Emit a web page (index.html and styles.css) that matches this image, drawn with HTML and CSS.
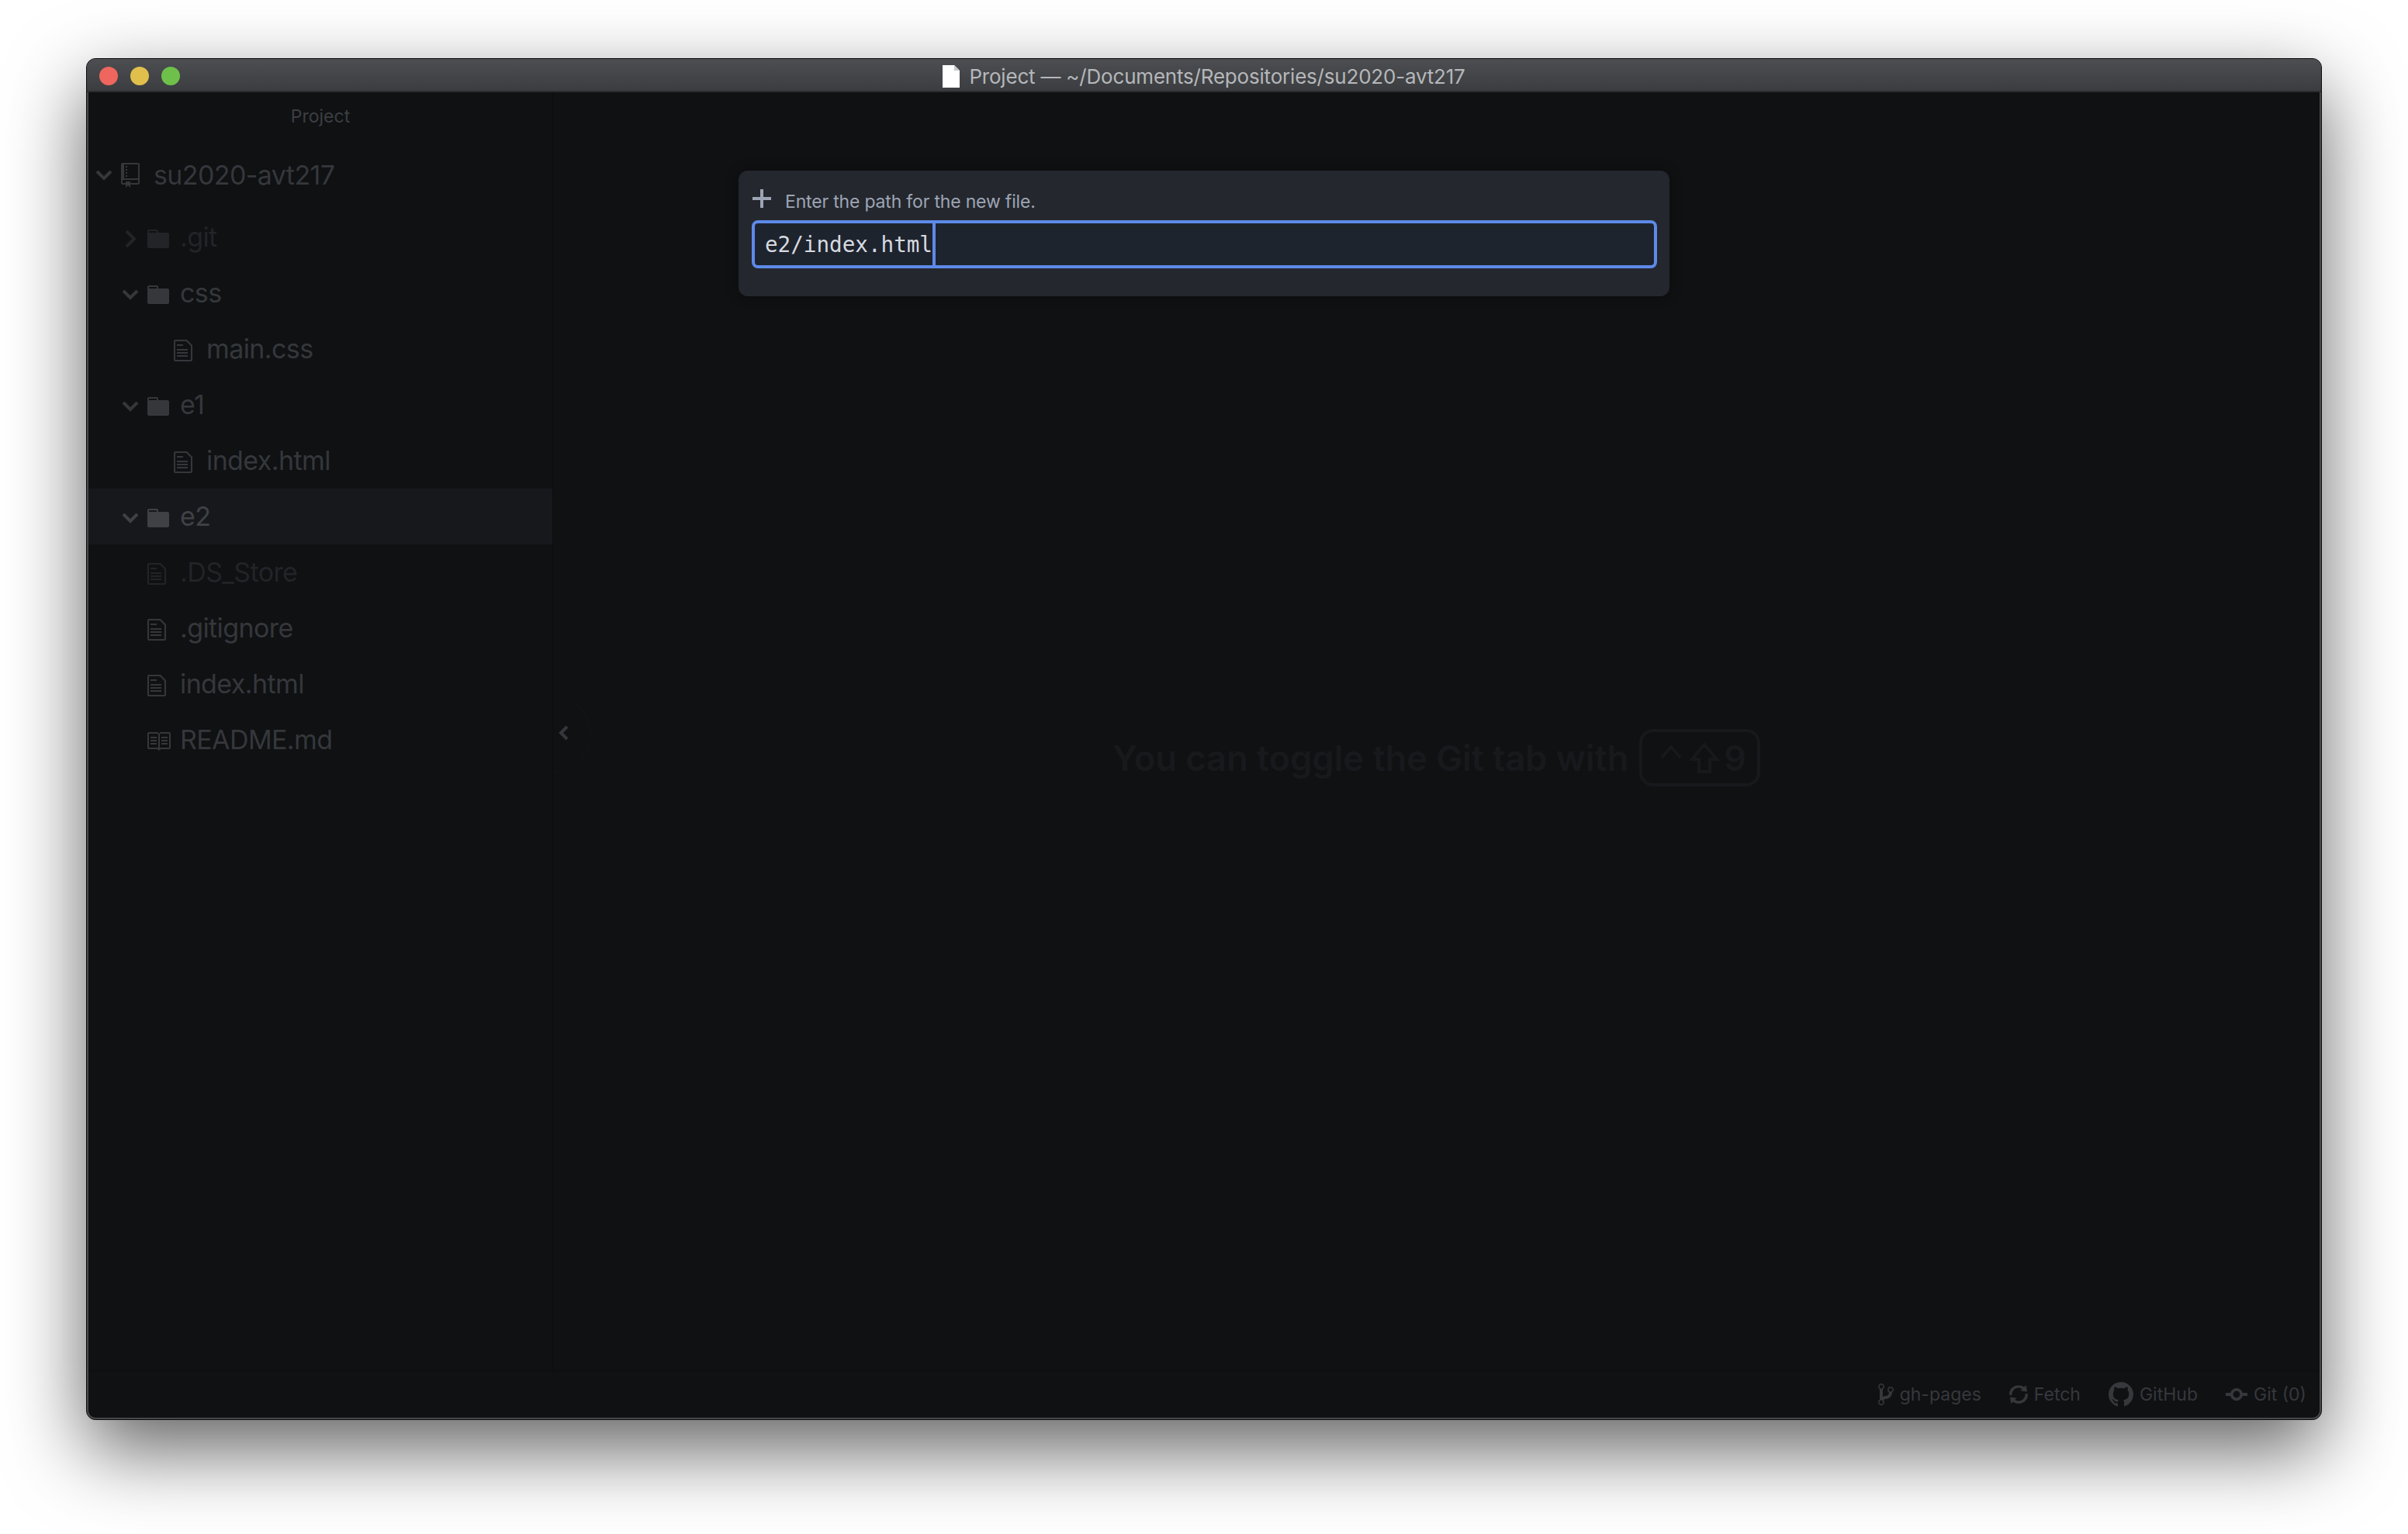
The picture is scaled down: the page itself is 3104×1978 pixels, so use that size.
FILE: index.html
```html
<!DOCTYPE html>
<html lang="en">
<head>
<meta charset="utf-8">
<title>Project</title>
<link rel="stylesheet" href="styles.css">
</head>
<body>
<svg class="defs" xmlns="http://www.w3.org/2000/svg">
  <symbol id="i-repo" viewBox="0 0 12 16"><path d="M4 9H3V8h1v1zm0-3H3v1h1V6zm0-2H3v1h1V4zm0-2H3v1h1V2zm8-1v12c0 .55-.45 1-1 1H6v2l-1.5-1.5L3 16v-2H1c-.55 0-1-.45-1-1V1c0-.55.45-1 1-1h10c.55 0 1 .45 1 1zm-1 10H1v2h2v-1h3v1h5v-2zm0-10H2v9h9V1z"/></symbol>
  <symbol id="i-folder" viewBox="0 0 14 16"><path d="M13 4H7V3c0-.66-.31-1-1-1H1c-.55 0-1 .45-1 1v10c0 .55.45 1 1 1h12c.55 0 1-.45 1-1V5c0-.55-.45-1-1-1zM6 4H1V3h5v1z"/></symbol>
  <symbol id="i-file" viewBox="0 0 12 16"><path d="M6 5H2V4h4v1zM2 8h7V7H2v1zm0 2h7V9H2v1zm0 2h7v-1H2v1zm10-7.500V14c0 .55-.45 1-1 1H1c-.55 0-1-.45-1-1V2c0-.55.45-1 1-1h7.500L12 4.500zM11 5L8 2H1v12h10V5z"/></symbol>
  <symbol id="i-book" viewBox="0 0 16 16"><path d="M3 5h4v1H3V5zm0 3h4V7H3v1zm0 2h4V9H3v1zm11-5h-4v1h4V5zm0 2h-4v1h4V7zm0 2h-4v1h4V9zm2-6v9c0 .55-.45 1-1 1H9.500l-1 1-1-1H2c-.55 0-1-.45-1-1V3c0-.55.45-1 1-1h5.500l1 1 1-1H15c.55 0 1 .45 1 1zm-8 .5L7.500 3H2v9h6V3.500zm7-.5H9.500l-.5.5V12h6V3z"/></symbol>
  <symbol id="i-branch" viewBox="0 0 10 16"><path d="M10 5c0-1.110-.89-2-2-2a1.993 1.993 0 0 0-1 3.720v.3c-.02.52-.23.98-.63 1.380-.4.4-.86.61-1.380.63-.83.02-1.480.16-2 .45V4.720a1.993 1.993 0 0 0-1-3.720C.88 1 0 1.890 0 3a2 2 0 0 0 1 1.720v6.560c-.59.35-1 .99-1 1.720 0 1.110.89 2 2 2 1.110 0 2-.89 2-2 0-.53-.2-1-.53-1.360.09-.06.48-.41.59-.47.25-.11.56-.17.94-.17 1.050-.05 1.950-.45 2.750-1.250S8.950 7.770 9 6.730h-.02C9.590 6.370 10 5.730 10 5zM2 1.800c.66 0 1.200.55 1.200 1.200 0 .65-.55 1.200-1.200 1.200C1.350 4.200.8 3.650.8 3c0-.65.55-1.200 1.200-1.200zm0 12.410c-.66 0-1.200-.55-1.200-1.200 0-.65.55-1.200 1.200-1.200.65 0 1.200.55 1.200 1.200 0 .65-.55 1.200-1.200 1.200zm6-8c-.66 0-1.200-.55-1.200-1.200 0-.65.55-1.200 1.200-1.200.65 0 1.200.55 1.200 1.200 0 .65-.55 1.200-1.200 1.200z"/></symbol>
  <symbol id="i-sync" viewBox="0 0 12 16"><path d="M10.240 7.400a4.150 4.150 0 0 1-1.200 3.600 4.346 4.346 0 0 1-5.410.54L4.800 10.400.5 9.800l.6 4.200 1.310-1.260c2.360 1.740 5.700 1.570 7.840-.54a5.876 5.876 0 0 0 1.740-4.460l-1.750-.34zM2.960 5a4.346 4.346 0 0 1 5.410-.54L7.200 5.600l4.300.6-.6-4.200-1.310 1.260c-2.360-1.740-5.700-1.570-7.850.54C.5 5.030-.06 6.650.01 8.260l1.750.35A4.170 4.170 0 0 1 2.960 5z"/></symbol>
  <symbol id="i-github" viewBox="0 0 16 16"><path d="M8 0C3.580 0 0 3.580 0 8c0 3.540 2.290 6.530 5.470 7.590.4.07.55-.17.55-.38 0-.19-.01-.82-.01-1.490-2.010.37-2.530-.49-2.690-.94-.09-.23-.48-.94-.82-1.130-.28-.15-.68-.52-.01-.53.63-.01 1.080.58 1.230.82.72 1.210 1.870.87 2.330.66.07-.52.28-.87.51-1.070-1.780-.2-3.640-.89-3.640-3.950 0-.87.31-1.590.82-2.150-.08-.2-.36-1.020.08-2.120 0 0 .67-.21 2.200.82.64-.18 1.320-.27 2-.27.68 0 1.360.09 2 .27 1.530-1.040 2.200-.82 2.200-.82.44 1.100.16 1.920.08 2.120.51.56.82 1.270.82 2.150 0 3.070-1.870 3.750-3.650 3.950.29.25.54.73.54 1.480 0 1.070-.01 1.930-.01 2.200 0 .21.15.46.55.38A8.013 8.013 0 0 0 16 8c0-4.420-3.580-8-8-8z"/></symbol>
  <symbol id="i-commit" viewBox="0 0 14 16"><path d="M10.860 7c-.45-1.720-2-3-3.860-3-1.860 0-3.410 1.280-3.860 3H0v2h3.140c.45 1.720 2 3 3.860 3 1.860 0 3.410-1.280 3.860-3H14V7h-3.140zM7 10.200c-1.220 0-2.200-.98-2.200-2.200 0-1.220.98-2.200 2.200-2.200 1.220 0 2.200.98 2.200 2.200 0 1.220-.98 2.200-2.200 2.200z"/></symbol>
  <symbol id="i-down" viewBox="0 0 22 14"><path d="M2 2l9 9 9-9" fill="none" stroke="currentColor" stroke-width="4"/></symbol>
  <symbol id="i-right" viewBox="0 0 22 22"><path d="M6 1l10 10-10 10" fill="none" stroke="currentColor" stroke-width="4"/></symbol>
</svg>

<div class="window">
  <header class="titlebar">
    <div class="lights">
      <span class="light red"></span>
      <span class="light yellow"></span>
      <span class="light green"></span>
    </div>
    <div class="title">
      <svg class="doc" viewBox="0 0 22 29"><path d="M0 0h15l7 7v22H0z" fill="#fff"/><path d="M15 0v7h7z" fill="#c9cacb"/></svg>
      <span>Project — ~/Documents/Repositories/su2020-avt217</span>
    </div>
  </header>

  <div class="workspace">
    <aside class="sidebar">
      <div class="tab">Project</div>
      <div class="row root">
        <svg class="chev"><use href="#i-down"/></svg>
        <svg class="ic repo"><use href="#i-repo"/></svg>
        <span>su2020-avt217</span>
      </div>
      <div class="row dir ignored">
        <svg class="chev side"><use href="#i-right"/></svg>
        <svg class="ic folder"><use href="#i-folder"/></svg>
        <span>.git</span>
      </div>
      <div class="row dir">
        <svg class="chev"><use href="#i-down"/></svg>
        <svg class="ic folder"><use href="#i-folder"/></svg>
        <span>css</span>
      </div>
      <div class="row file deep">
        <svg class="ic doc-ic"><use href="#i-file"/></svg>
        <span>main.css</span>
      </div>
      <div class="row dir">
        <svg class="chev"><use href="#i-down"/></svg>
        <svg class="ic folder"><use href="#i-folder"/></svg>
        <span>e1</span>
      </div>
      <div class="row file deep">
        <svg class="ic doc-ic"><use href="#i-file"/></svg>
        <span>index.html</span>
      </div>
      <div class="row dir selected">
        <svg class="chev"><use href="#i-down"/></svg>
        <svg class="ic folder"><use href="#i-folder"/></svg>
        <span>e2</span>
      </div>
      <div class="row file ignored">
        <svg class="ic doc-ic"><use href="#i-file"/></svg>
        <span>.DS_Store</span>
      </div>
      <div class="row file">
        <svg class="ic doc-ic"><use href="#i-file"/></svg>
        <span>.gitignore</span>
      </div>
      <div class="row file">
        <svg class="ic doc-ic"><use href="#i-file"/></svg>
        <span>index.html</span>
      </div>
      <div class="row file">
        <svg class="ic book"><use href="#i-book"/></svg>
        <span>README.md</span>
      </div>
    </aside>
    <div class="dock-toggle">
      <svg viewBox="0 0 14 20"><path d="M11 2L3 10l8 8" fill="none" stroke="currentColor" stroke-width="4"/></svg>
    </div>
    <main class="pane">
      <div class="hint">
        <span>You can toggle the Git tab with</span>
        <span class="kbd">
          <svg class="k-ctrl" viewBox="0 0 30 18"><path d="M2 17L15 2l13 15" fill="none" stroke="currentColor" stroke-width="4"/></svg>
          <svg class="k-shift" viewBox="0 0 38 40"><path d="M19 3L3 22h9v16h14V22h9z" fill="none" stroke="currentColor" stroke-width="4"/></svg>
          <span class="k-nine">9</span>
        </span>
      </div>
    </main>
  </div>

  <footer class="statusbar">
    <span class="stat"><svg class="s-branch"><use href="#i-branch"/></svg>gh-pages</span>
    <span class="stat"><svg class="s-sync"><use href="#i-sync"/></svg>Fetch</span>
    <span class="stat"><svg class="s-github"><use href="#i-github"/></svg>GitHub</span>
    <span class="stat"><svg class="s-commit"><use href="#i-commit"/></svg>Git (0)</span>
  </footer>

  <div class="modal">
    <div class="prompt">
      <svg class="plus" viewBox="0 0 24 24"><path d="M12 0v24M0 12h24" fill="none" stroke="currentColor" stroke-width="4"/></svg>
      <span>Enter the path for the new file.</span>
    </div>
    <div class="input"><span>e2/index.html</span><i class="caret"></i></div>
  </div>
</div>
</body>
</html>
```

FILE: styles.css
```css
* { box-sizing: border-box; }
html, body { margin: 0; height: 100%; }
body {
  background: #fff;
  padding: 75px 111px 0;
  font-family: "Inter", "Liberation Sans", sans-serif;
  overflow: hidden;
}
.defs { display: none; }
svg { fill: currentColor; flex: none; display: block; }

.window {
  position: relative;
  width: 2882px;
  height: 1756px;
  display: flex;
  flex-direction: column;
  background: #47484a;
  border: 1px solid #0b0b0c;
  border-radius: 12px;
  padding: 0 2px 2px;
  box-shadow: 0 38px 100px rgba(0, 0, 0, .62);
}

.titlebar {
  flex: none;
  height: 43px;
  margin: 0 -2px;
  padding-top: 3px;
  border-radius: 11px 11px 0 0;
  border-bottom: 2px solid #2b2c2e;
  background: linear-gradient(#4c4e51, #3b3d40);
  display: grid;
  grid-template-columns: 1fr auto 1fr;
  align-items: center;
}
.lights { display: flex; gap: 16px; padding-left: 16px; }
.light { width: 24px; height: 24px; border-radius: 50%; }
.red { background: #ee665d; }
.yellow { background: #e0bf4c; }
.green { background: #6fc04a; }
.title {
  display: flex;
  align-items: center;
  gap: 12px;
  color: #b5b7ba;
  font-size: 26px;
  letter-spacing: -.2px;
  white-space: nowrap;
}
.doc { width: 22px; height: 29px; }

.workspace {
  flex: 1;
  min-height: 0;
  display: flex;
  position: relative;
  background: #0f1113;
}
.sidebar {
  flex: none;
  width: 599px;
  border-right: 1px solid #0c0d0f;
  color: #35373b;
}
.tab {
  height: 71px;
  padding-top: 16px;
  line-height: 30px;
  text-align: center;
  font-size: 23px;
  color: #3c3e42;
}
.row {
  height: 72px;
  display: flex;
  align-items: center;
  font-size: 34px;
  letter-spacing: -.6px;
  white-space: nowrap;
}
.row span { margin-top: -2px; }
.root { padding-left: 9px; margin-bottom: 8px; }
.dir { padding-left: 43px; }
.file { padding-left: 76px; }
.file.deep { padding-left: 110px; }
.selected { background: #16181c; color: #3f4145; }
.ignored { color: #222428; }

.chev { width: 22px; height: 14px; margin-right: 11px; }
.dir .chev { margin-top: 4px; }
.chev.side { height: 22px; }
.ic { height: 32px; }
.dir .ic, .file .ic { margin-top: 4px; }
.repo { width: 24px; margin-right: 18px; }
.folder { width: 28px; margin-right: 14px; }
.doc-ic { width: 24px; margin-right: 18px; }
.book { width: 32px; margin-left: -2px; margin-right: 12px; }

.dock-toggle {
  position: absolute;
  left: 599px;
  top: 778px;
  width: 48px;
  height: 98px;
  border: 1px solid #141619;
  border-left: 0;
  border-radius: 0 49px 49px 0;
  background: #0f1113;
  color: #35373b;
  display: flex;
  align-items: center;
  padding-left: 7px;
}
.dock-toggle svg { width: 14px; height: 20px; margin-top: -2px; }

.pane {
  flex: 1;
  min-width: 0;
  display: flex;
  align-items: center;
  justify-content: center;
  padding-top: 68px;
}
.hint {
  display: flex;
  align-items: center;
  gap: 14px;
  font-size: 45.6px;
  font-weight: 600;
  letter-spacing: -.2px;
  color: #18191c;
  white-space: nowrap;
}
.kbd {
  width: 156px;
  height: 74px;
  border: 4px solid #18191c;
  border-radius: 18px;
  display: flex;
  align-items: center;
  padding-left: 23px;
}
.k-ctrl { width: 28px; height: 17px; margin-right: 10px; margin-top: -16px; }
.k-shift { width: 38px; height: 40px; margin-right: 6px; }
.k-nine { font-size: 45px; line-height: 1; }

.statusbar {
  flex: none;
  height: 61px;
  border-top: 1px solid #0b0c0e;
  background: #0f1113;
  display: flex;
  align-items: center;
  justify-content: flex-end;
  gap: 36px;
  padding-right: 17px;
  font-size: 23px;
  color: #36383c;
  border-radius: 0 0 9px 9px;
}
.stat { display: flex; align-items: center; gap: 8px; white-space: nowrap; }
.stat svg { height: 32px; }
.s-branch { width: 20px; }
.s-sync { width: 24px; }
.s-github { width: 32px; }
.s-commit { width: 28px; }

.modal {
  position: absolute;
  left: 840px;
  top: 144px;
  width: 1200px;
  height: 162px;
  padding: 16px 16px 0 17px;
  background: #24272e;
  border-radius: 12px;
  box-shadow: 0 0 16px rgba(0, 0, 0, .35);
}
.prompt {
  height: 48px;
  display: flex;
  align-items: center;
  gap: 18px;
  padding-left: 1px;
  font-size: 23px;
  letter-spacing: -.18px;
  color: #9da5b4;
}
.plus { width: 24px; height: 24px; margin-bottom: 8px; }
.input {
  height: 62px;
  display: flex;
  align-items: center;
  padding-left: 13px;
  border: 4px solid #5d8aea;
  border-radius: 8px;
  background: #1e242e;
  color: #d7dae0;
  font-family: "DejaVu Sans Mono", "Liberation Mono", monospace;
  font-size: 27.6px;
  white-space: pre;
}
.caret { align-self: stretch; width: 4px; background: #5d8aea; }
```
